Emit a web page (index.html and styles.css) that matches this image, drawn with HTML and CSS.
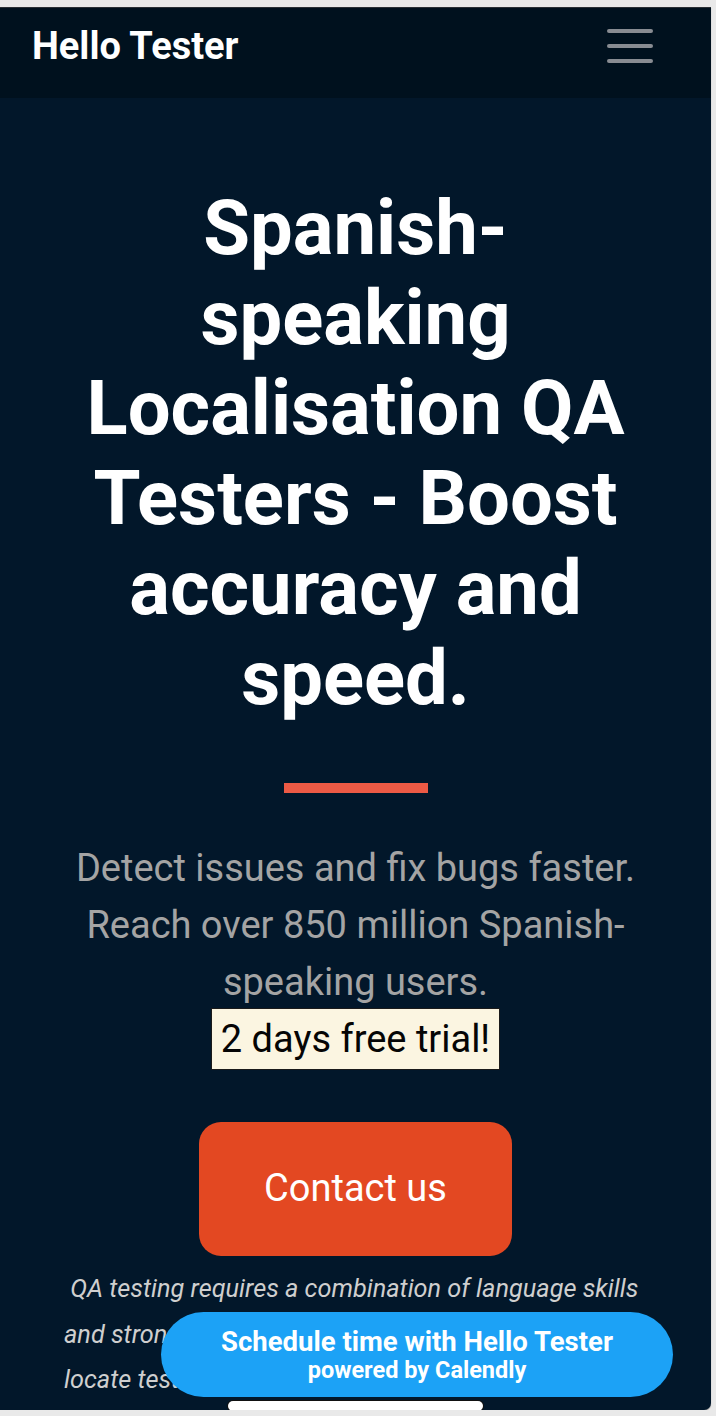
FILE: index.html
```html
<!DOCTYPE html>
<html lang="en">
<head>
<meta charset="utf-8">
<title>Hello Tester</title>
<link rel="stylesheet" href="styles.css">
</head>
<body>
<div class="screen">
  <header class="nav">
    <div class="brand">Hello Tester</div>
    <button class="burger" aria-label="Menu">
      <span class="bar"></span>
      <span class="bar"></span>
      <span class="bar"></span>
    </button>
  </header>
  <main class="hero">
    <h1 class="title">Spanish-speaking Localisation QA Testers - Boost accuracy and speed.</h1>
    <div class="divider"></div>
    <p class="lead">Detect issues and fix bugs faster. Reach over 850 million Spanish-speaking users.<br><span class="trial">2 days free trial!</span></p>
    <a class="cta" href="#">Contact us</a>
    <p class="body-text">&nbsp;QA testing requires a combination of language skills and strong technical knowledge to find, reproduce, locate testing issues and report them before your users do.</p>
  </main>
  <a class="calendly" href="#">
    <span class="cal-main">Schedule time with Hello Tester</span>
    <span class="cal-sub">powered by Calendly</span>
  </a>
  <div class="home-indicator"></div>
</div>
</body>
</html>
```
FILE: styles.css
```css
* { box-sizing: border-box; }

html, body {
  margin: 0;
  padding: 0;
  background: #e9e9e9;
  font-family: Roboto, "Noto Sans", Arial, sans-serif;
}

.screen {
  position: relative;
  margin-top: 7px;
  width: 711px;
  height: 1403px;
  overflow: hidden;
  background: #02172a;
  border-top: 1px solid #2a2f35;
  border-radius: 0 0 7px 0;
  box-shadow: 0 1px 1px rgba(0,0,0,0.35);
}

.nav {
  height: 90px;
  background: #00111e;
  display: flex;
  align-items: center;
  justify-content: space-between;
  padding: 0 58px 14px 32px;
}

.brand {
  color: #ffffff;
  font-weight: 700;
  font-size: 38px;
}

.burger {
  width: 46px;
  padding: 0;
  border: 0;
  background: transparent;
  display: flex;
  flex-direction: column;
  gap: 11px;
}

.bar {
  display: block;
  height: 4px;
  border-radius: 2px;
  background: #888c92;
}

.hero {
  display: flex;
  flex-direction: column;
  align-items: center;
  text-align: center;
  padding-top: 85px;
}

.title {
  margin: 0;
  width: 590px;
  color: #ffffff;
  font-size: 76px;
  line-height: 90px;
  font-weight: 700;
}

.divider {
  width: 144px;
  height: 10px;
  background: #ec5a45;
  margin-top: 60px;
}

.lead {
  margin: 47px 0 0;
  padding: 0 40px;
  color: #a4a4a4;
  font-size: 38px;
  line-height: 57px;
}

.trial {
  color: #050505;
  background: #fbf5e1;
  border: 1px solid #1a1a1a;
  padding: 8px 9px;
}

.cta {
  margin-top: 54px;
  display: inline-block;
  padding: 38px 65px 39px;
  background: #e34822;
  border-radius: 22px;
  color: #ffffff;
  font-size: 38px;
  line-height: 57px;
  text-decoration: none;
}

.body-text {
  align-self: stretch;
  margin: 10px 0 0;
  padding: 0 64px;
  text-align: left;
  color: #cfcfcf;
  font-style: italic;
  font-size: 25.3px;
  line-height: 45.6px;
}

.calendly {
  position: absolute;
  left: 161px;
  top: 1304px;
  width: 512px;
  height: 85px;
  border-radius: 43px;
  background: #1ca2f6;
  display: flex;
  flex-direction: column;
  align-items: center;
  justify-content: center;
  text-decoration: none;
  color: #ffffff;
  font-weight: 700;
}

.cal-main {
  font-size: 27.5px;
  line-height: 30px;
}

.cal-sub {
  font-size: 23.5px;
  line-height: 26px;
}

.home-indicator {
  position: absolute;
  left: 228px;
  top: 1393px;
  width: 255px;
  height: 10px;
  border-radius: 5px;
  background: #ffffff;
  box-shadow: 0 0 0 1px #111;
}
```
